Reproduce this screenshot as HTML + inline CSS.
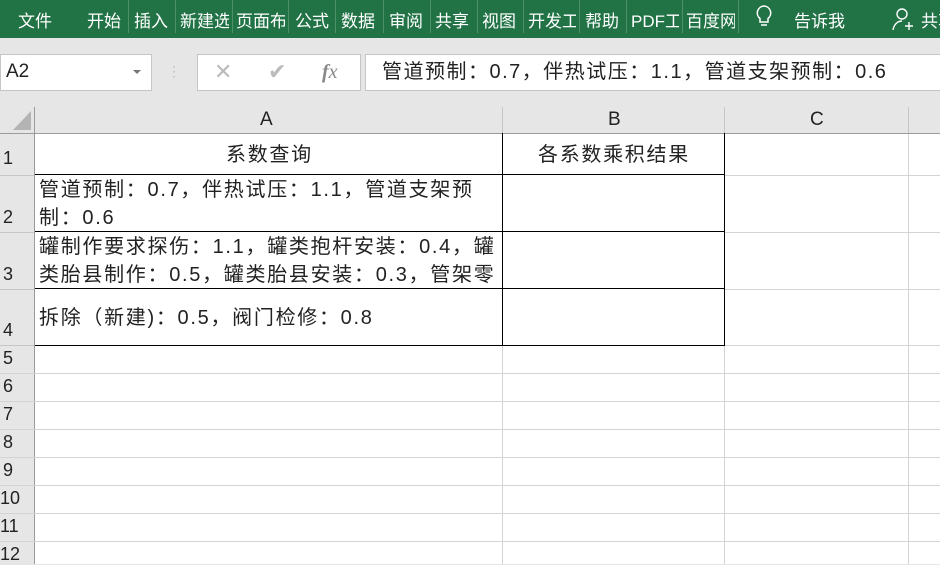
<!DOCTYPE html>
<html><head><meta charset="utf-8"><style>
*{margin:0;padding:0;box-sizing:border-box}
body{width:940px;height:564px;overflow:hidden;background:#e6e6e6;font-family:"Liberation Sans","Noto Sans CJK SC",sans-serif;position:relative}
.a{position:absolute}
.top{left:0;top:0;width:940px;height:38px;background:#217346}
.m{position:absolute;top:7px;color:#fff;font-size:17px;white-space:nowrap;overflow:hidden}
.sep{position:absolute;top:0;width:1px;height:33px;background:#4e9168}
.box{position:absolute;background:#fff;border:1px solid #c6c6c6}
.vl{position:absolute;width:1px;background:#d4d4d4}
.rn{position:absolute;left:0;width:34px;font-size:18px;color:#222;padding-left:3px}
.t{position:absolute;font-size:18px;color:#222;white-space:nowrap;line-height:28px}
.c{font-size:20px;letter-spacing:1.7px}
</style></head><body>
<div class="a top"></div>
<div class="m" style="left:18px">文件</div>
<div class="m" style="left:87px">开始</div>
<div class="m" style="left:134px">插入</div>
<div class="m" style="left:180px;width:49px">新建选项</div>
<div class="m" style="left:236px;width:49px">页面布局</div>
<div class="m" style="left:295px">公式</div>
<div class="m" style="left:341px">数据</div>
<div class="m" style="left:389px">审阅</div>
<div class="m" style="left:435px">共享</div>
<div class="m" style="left:482px">视图</div>
<div class="m" style="left:528px;width:48px">开发工具</div>
<div class="m" style="left:585px">帮助</div>
<div class="m" style="left:631px;width:48px">PDF工具</div>
<div class="m" style="left:686px;width:49px">百度网盘</div>
<div class="m" style="left:794px">告诉我</div>
<div class="m" style="left:921px">共享</div>
<div class="sep" style="left:128px"></div><div class="sep" style="left:175px"></div><div class="sep" style="left:232px"></div><div class="sep" style="left:288px"></div><div class="sep" style="left:335px"></div><div class="sep" style="left:383px"></div><div class="sep" style="left:430px"></div><div class="sep" style="left:477px"></div><div class="sep" style="left:523px"></div><div class="sep" style="left:579px"></div><div class="sep" style="left:626px"></div><div class="sep" style="left:682px"></div><div class="sep" style="left:738px"></div>
<svg class="a" style="left:754px;top:4px" width="20" height="26" viewBox="0 0 20 26"><path d="M10 2a7 7 0 0 0-4 12.5V18h8v-3.5A7 7 0 0 0 10 2z M7 21h6" fill="none" stroke="#fff" stroke-width="1.5"/></svg>
<svg class="a" style="left:892px;top:6px" width="22" height="26" viewBox="0 0 22 26"><circle cx="10" cy="8" r="5" fill="none" stroke="#fff" stroke-width="1.4"/><path d="M1 24c1-6 5-9 9-9M13 20h8M17 16v8" fill="none" stroke="#fff" stroke-width="1.4"/></svg>
<div class="box" style="left:0;top:54px;width:152px;height:37px"></div>
<div class="t" style="left:6px;top:58px;font-size:19px">A2</div>
<div class="a" style="left:133px;top:70px;border:4px solid transparent;border-top:4px solid #777"></div>
<div class="a" style="left:172px;top:64px;color:#aaa;font-size:12px;line-height:5px">·<br>·<br>·</div>
<div class="box" style="left:197px;top:54px;width:164px;height:37px"></div>
<div class="t" style="left:214px;top:58px;color:#bbb;font-size:22px">✕</div>
<div class="t" style="left:268px;top:58px;color:#bbb;font-size:22px">✔</div>
<div class="t" style="left:322px;top:58px;color:#888;font-family:'Liberation Serif',serif;font-style:italic;font-size:20px"><b>f</b>x</div>
<div class="box" style="left:365px;top:54px;width:580px;height:37px"></div>
<div class="t" style="left:382px;top:58px;font-size:20px;letter-spacing:1.5px">管道预制：0.7，伴热试压：1.1，管道支架预制：0.6</div>
<!-- grid -->
<div class="a" style="left:35px;top:134px;width:905px;height:430px;background:#fff"></div>
<div class="a" style="left:0;top:133px;width:940px;height:1px;background:#9b9b9b"></div>
<div class="a" style="left:34px;top:107px;width:1px;height:457px;background:#9b9b9b"></div>
<svg class="a" style="left:11px;top:109px" width="22" height="22"><path d="M20 2V21H2z" fill="#b4b4b4"/></svg>
<div class="a" style="left:502px;top:107px;width:1px;height:26px;background:#c6c6c6"></div>
<div class="a" style="left:724px;top:107px;width:1px;height:26px;background:#c6c6c6"></div>
<div class="a" style="left:908px;top:107px;width:1px;height:26px;background:#c6c6c6"></div>
<div class="t" style="left:260px;top:106px;font-size:19px">A</div>
<div class="t" style="left:608px;top:106px;font-size:19px">B</div>
<div class="t" style="left:810px;top:106px;font-size:19px">C</div>
<div class="a" style="left:0;top:175px;width:34px;height:1px;background:#c6c6c6"></div>
<div class="a" style="left:0;top:232px;width:34px;height:1px;background:#c6c6c6"></div>
<div class="a" style="left:0;top:289px;width:34px;height:1px;background:#c6c6c6"></div>
<div class="a" style="left:0;top:345px;width:34px;height:1px;background:#c6c6c6"></div>
<div class="a" style="left:0;top:373px;width:940px;height:1px;background:#d4d4d4"></div>
<div class="a" style="left:0;top:401px;width:940px;height:1px;background:#d4d4d4"></div>
<div class="a" style="left:0;top:429px;width:940px;height:1px;background:#d4d4d4"></div>
<div class="a" style="left:0;top:457px;width:940px;height:1px;background:#d4d4d4"></div>
<div class="a" style="left:0;top:485px;width:940px;height:1px;background:#d4d4d4"></div>
<div class="a" style="left:0;top:513px;width:940px;height:1px;background:#d4d4d4"></div>
<div class="a" style="left:0;top:541px;width:940px;height:1px;background:#d4d4d4"></div>
<div class="a" style="left:725px;top:175px;width:215px;height:1px;background:#d4d4d4"></div>
<div class="a" style="left:725px;top:232px;width:215px;height:1px;background:#d4d4d4"></div>
<div class="a" style="left:725px;top:289px;width:215px;height:1px;background:#d4d4d4"></div>
<div class="a" style="left:724px;top:345px;width:216px;height:1px;background:#d4d4d4"></div>
<div class="vl" style="left:502px;top:346px;height:218px"></div>
<div class="vl" style="left:724px;top:346px;height:218px"></div>
<div class="vl" style="left:908px;top:134px;height:430px"></div>
<div class="a" style="left:35px;top:133px;width:690px;height:213px;border-right:1px solid #000;border-bottom:1px solid #000"></div>
<div class="a" style="left:35px;top:174px;width:690px;height:1px;background:#000"></div>
<div class="a" style="left:35px;top:231px;width:690px;height:1px;background:#000"></div>
<div class="a" style="left:35px;top:288px;width:690px;height:1px;background:#000"></div>
<div class="a" style="left:502px;top:133px;width:1px;height:213px;background:#000"></div>
<div class="rn" style="top:148px">1</div>
<div class="rn" style="top:207px">2</div>
<div class="rn" style="top:264px">3</div>
<div class="rn" style="top:320px">4</div>
<div class="rn" style="top:348px">5</div>
<div class="rn" style="top:376px">6</div>
<div class="rn" style="top:404px">7</div>
<div class="rn" style="top:432px">8</div>
<div class="rn" style="top:460px">9</div>
<div class="rn" style="top:488px;padding-left:0">10</div>
<div class="rn" style="top:516px;padding-left:0">11</div>
<div class="rn" style="top:544px;padding-left:0">12</div>
<div class="t c" style="left:226px;top:141px">系数查询</div>
<div class="t c" style="left:538px;top:141px">各系数乘积结果</div>
<div class="t c" style="left:39px;top:176px">管道预制：0.7，伴热试压：1.1，管道支架预</div>
<div class="t c" style="left:39px;top:204px">制：0.6</div>
<div class="a" style="left:35px;top:233px;width:467px;height:55px;overflow:hidden">
<div class="t c" style="left:4px;top:0">罐制作要求探伤：1.1，罐类抱杆安装：0.4，罐</div>
<div class="t c" style="left:4px;top:28px">类胎县制作：0.5，罐类胎县安装：0.3，管架零</div></div>
<div class="t c" style="left:39px;top:304px">拆除（新建)：0.5，阀门检修：0.8</div>
</body></html>
